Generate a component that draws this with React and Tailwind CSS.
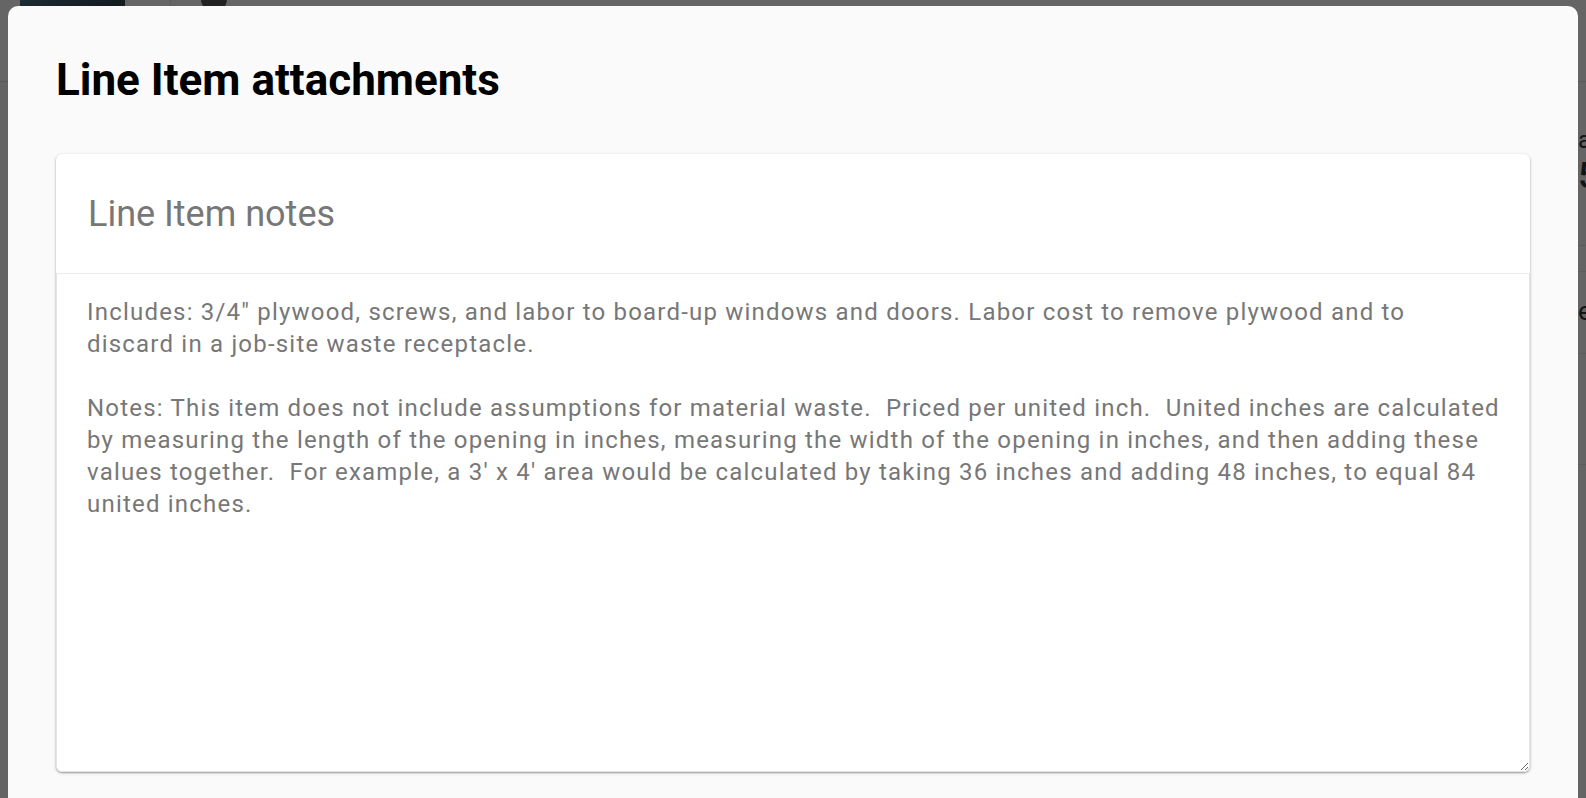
import { useState } from 'react';

const NOTES = `Includes: 3/4" plywood, screws, and labor to board-up windows and doors. Labor cost to remove plywood and to
discard in a job-site waste receptacle.

Notes: This item does not include assumptions for material waste.  Priced per united inch.  United inches are calculated by measuring the length of the opening in inches, measuring the width of the opening in inches, and then adding these values together.  For example, a 3' x 4' area would be calculated by taking 36 inches and adding 48 inches, to equal 84 united inches.`;

function BackgroundPage() {
  return (
    <div className="flex h-full flex-col bg-[#fafafa]">
      {/* top bar */}
      <div className="flex h-[82px] items-start border-b border-[#e0e0e0] bg-[#fdfdfd]">
        <div className="ml-[20px] h-[60px] w-[105px] bg-gradient-to-br from-[#4a6d80] via-[#2f4550] to-[#7d8a80]" />
        <div className="ml-[45px] h-[60px] w-px bg-[#e4e4e4]" />
        <div className="ml-[30px] -mt-[14px] h-[26px] w-[26px] rounded-full bg-[#555]" />
      </div>
      {/* content rows peeking out at the right edge */}
      <div className="flex flex-1">
        <div className="flex-1" />
        <div className="flex w-[8px] flex-col overflow-hidden text-[#333]" style={{ fontFamily: 'Roboto, sans-serif' }}>
          <div className="h-[163px] pt-[44px]">
            <div className="text-[24px] leading-[28px]">a</div>
            <div className="text-[36px] font-medium leading-[44px]">5</div>
          </div>
          <div className="h-[26px] border-t border-[#e4e4e4]" />
          <div className="h-[82px] border-t border-[#e4e4e4] pt-[24px]">
            <div className="text-[26px] leading-[30px]">e</div>
          </div>
          <div className="h-[111px] border-t border-[#e4e4e4]" />
          <div className="flex-1 border-t border-[#e4e4e4]" />
        </div>
      </div>
    </div>
  );
}

export default function App() {
  const [notes, setNotes] = useState(NOTES);

  return (
    <div className="relative h-[798px] w-full overflow-hidden" style={{ fontFamily: 'Roboto, "Liberation Sans", sans-serif' }}>
      <BackgroundPage />

      {/* dialog overlay */}
      <div className="absolute inset-0 flex justify-center bg-black/60 pt-[6px]">
        <div className="h-[900px] w-[1570px] rounded-[10px] bg-[#fafafa] px-12 pt-[47px]">
          <h1 className="text-[44px] font-bold leading-[54px] text-black">Line Item attachments</h1>

          <div className="mt-[47px] flex flex-col rounded-md bg-white shadow-[0_1px_3px_rgba(0,0,0,0.3),0_1px_1px_rgba(0,0,0,0.14)]">
            <div className="flex h-[120px] items-center border-b border-[#ececec] px-8">
              <h2 className="text-[36px] leading-[42px] text-[#777]">Line Item notes</h2>
            </div>
            <textarea
              value={notes}
              onChange={e => setNotes(e.target.value)}
              className="block h-[498px] w-full resize-y rounded-b-md border border-t-0 border-[#e4e4e4] bg-white pl-[30px] pr-[24px] pt-[22px] text-[24px] leading-[32px] tracking-[1.2px] text-[#777] outline-none"
              style={{ fontFamily: 'Roboto, "Liberation Sans", sans-serif' }}
            />
          </div>
        </div>
      </div>
    </div>
  );
}
